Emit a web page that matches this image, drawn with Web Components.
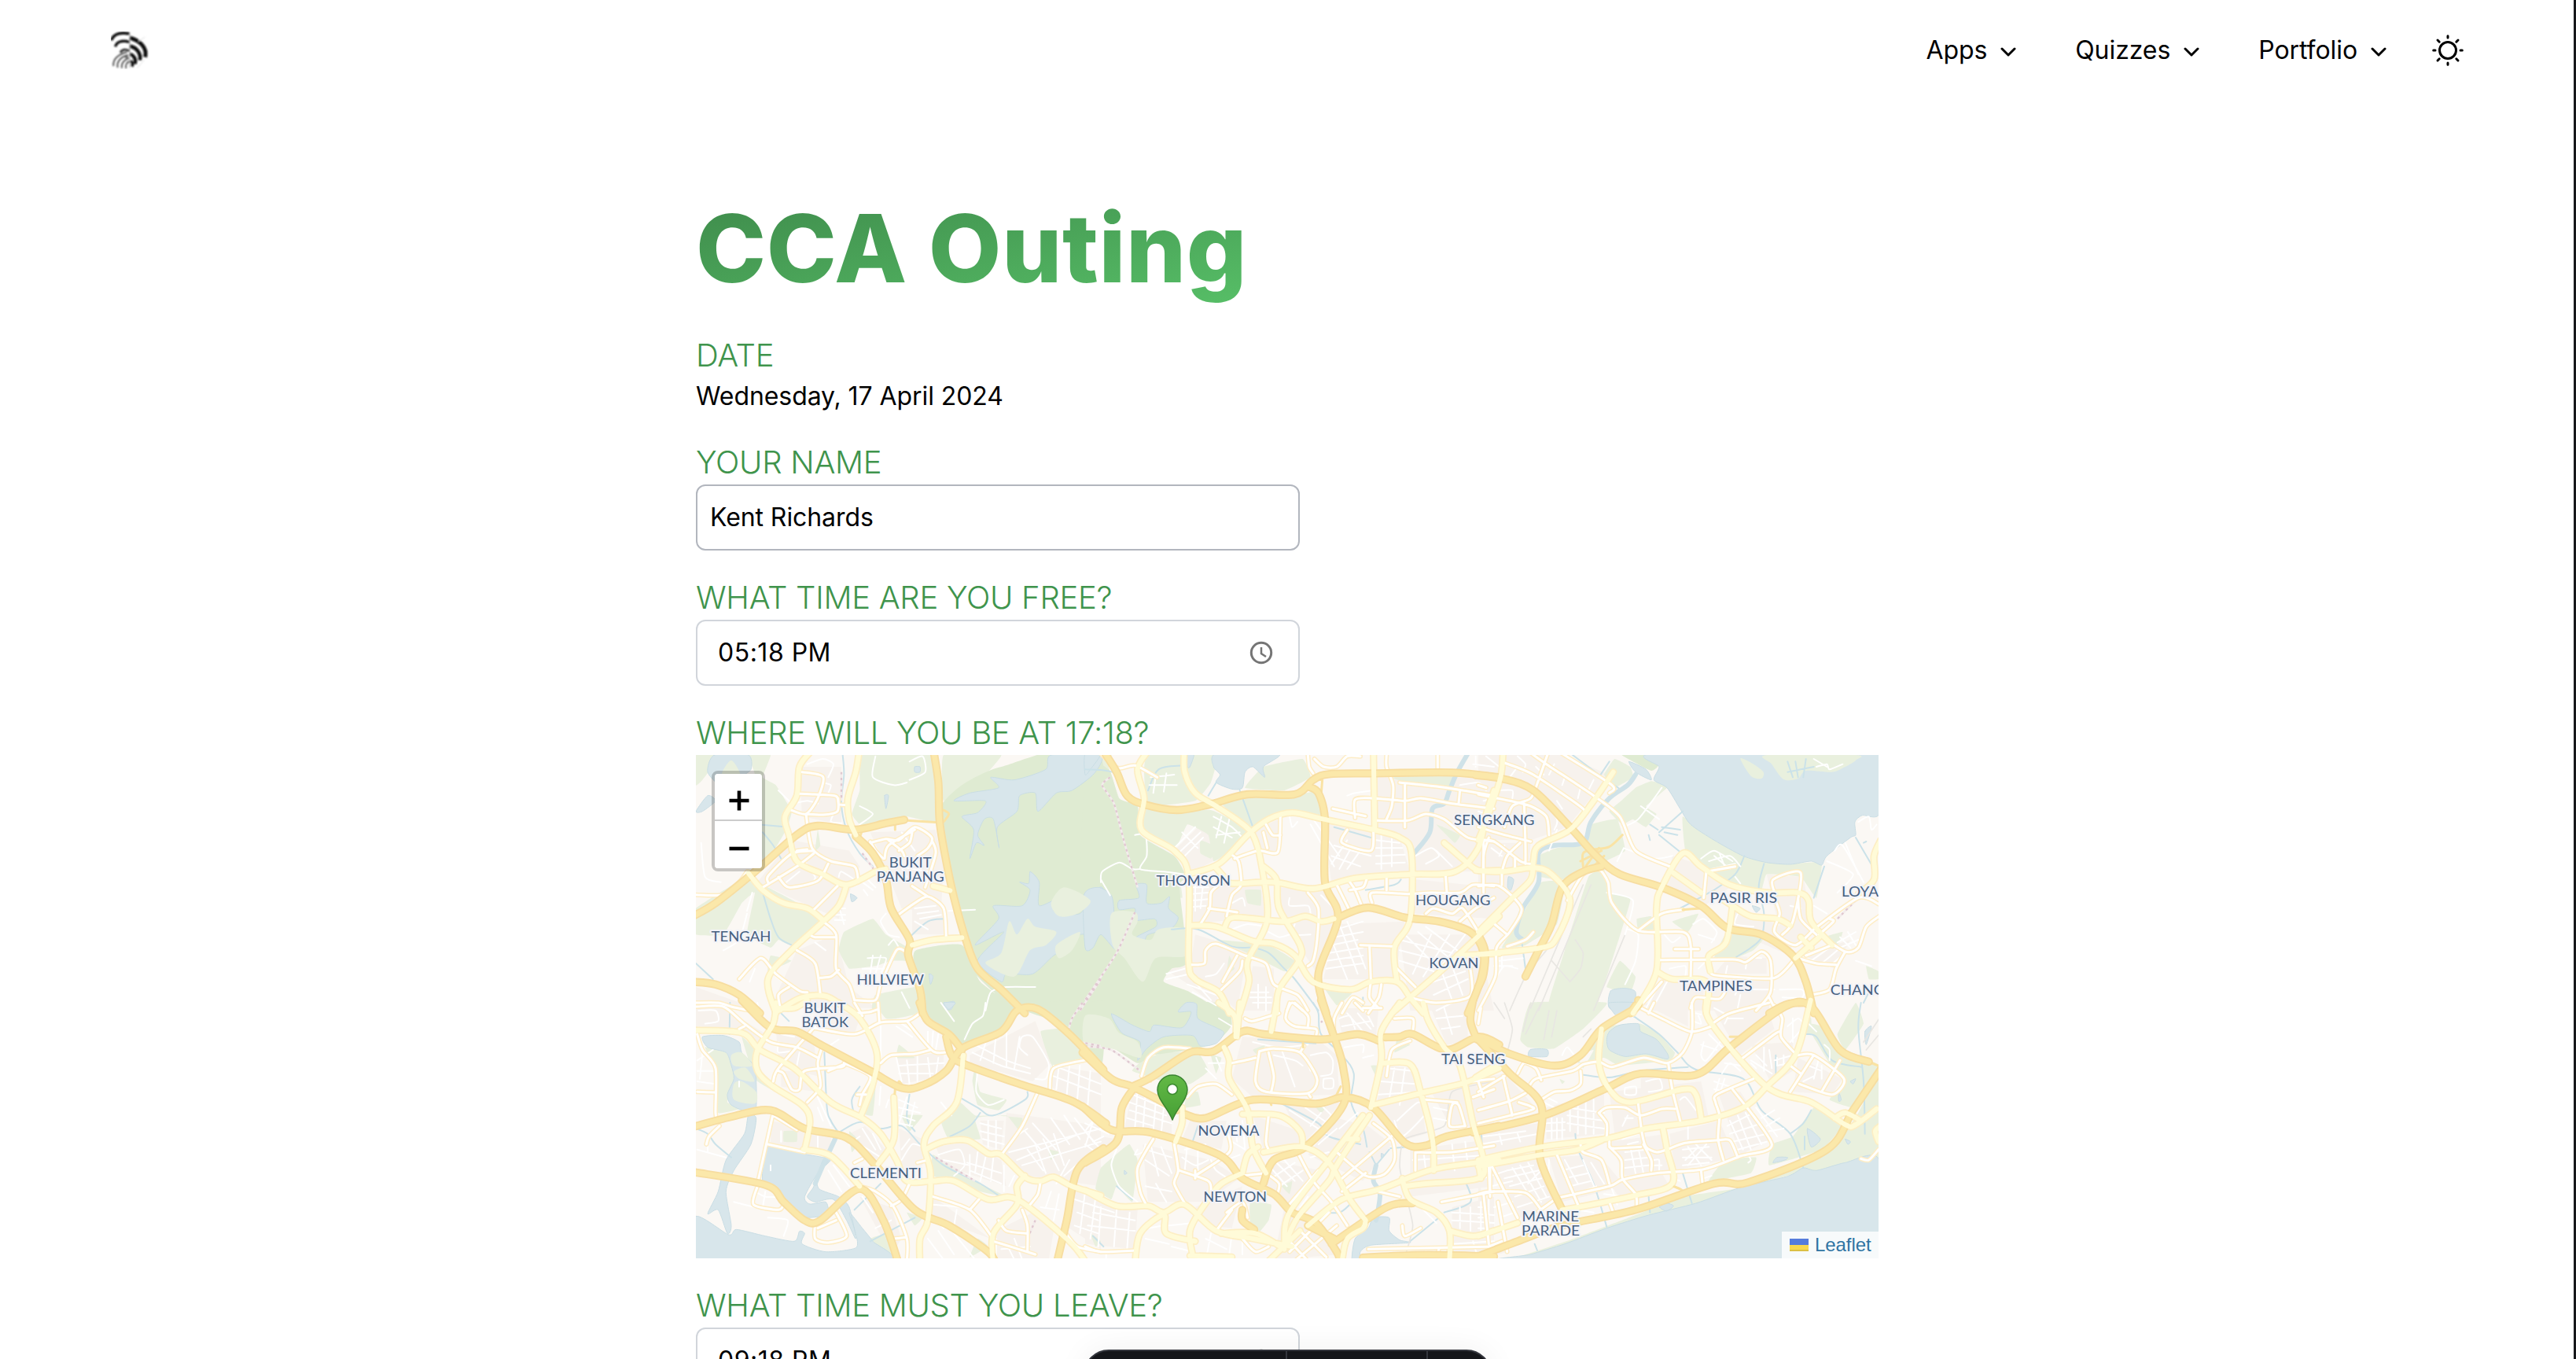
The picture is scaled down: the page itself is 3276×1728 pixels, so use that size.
<!DOCTYPE html>
<html lang="en">
<head>
<meta charset="utf-8">
<title>CCA Outing</title>
<style>
html,body{margin:0;height:100%;overflow:hidden;background:#fff}
body{font-family:Inter,"Liberation Sans",sans-serif;font-size:32px;line-height:48px;letter-spacing:-.08px;color:#000}
</style>
</head>
<body>
<outing-page>
  <site-header slot="header">
    <nav-item>Apps</nav-item><nav-item>Quizzes</nav-item><nav-item>Portfolio</nav-item>
  </site-header>
  <page-title>CCA Outing</page-title>
  <form-field label="DATE">Wednesday, 17 April 2024</form-field>
  <form-field label="YOUR NAME"><text-box tone="strong">Kent Richards</text-box></form-field>
  <form-field label="WHAT TIME ARE YOU FREE?"><text-box clock>05:18 PM</text-box></form-field>
  <form-field label="WHERE WILL YOU BE AT 17:18?"><city-map></city-map></form-field>
  <form-field label="WHAT TIME MUST YOU LEAVE?"><text-box clock>09:18 PM</text-box></form-field>
  <floating-dock slot="dock"></floating-dock>
</outing-page>
<script>
const define = (name, html, setup) => customElements.define(name, class extends HTMLElement {
  constructor() {
    super();
    const root = this.attachShadow({mode: 'open'});
    root.innerHTML = html;
  }
  connectedCallback() { if (setup) setup(this, this.shadowRoot); }
});

define('outing-page', `<style>
:host{display:block;position:relative;box-sizing:border-box;height:1728px;width:100%;overflow:hidden;border-right:3px solid #17181b;background:#fff}
main{display:flex;flex-direction:column;gap:32px;width:1504px;margin:128px 0 0 885px}
</style><slot name="header"></slot><main><slot></slot></main><slot name="dock"></slot>`);

define('site-header', `<style>
:host{display:flex;align-items:center;justify-content:space-between;height:128px;box-sizing:border-box;padding:0 141px}
nav{display:flex;align-items:center;gap:75px}
.logo{width:48px;height:48px;display:block}
.sun{width:48px;height:48px;display:block;margin-left:-21px;margin-right:-5px}
</style>
<svg class="logo" viewBox="0 0 144 144" fill="none" stroke="#111">
<defs><filter id="soft"><feGaussianBlur stdDeviation="2.4"/></filter></defs>
<g filter="url(#soft)">
<path d="M2 34C10 8 40 2 71 9" stroke-width="11"/>
<path d="M17 58C22 38 45 32 71 41" stroke-width="10"/>
<path d="M36 80C42 69 55 66 71 74" stroke-width="9" stroke="#333"/>
<path d="M72 24C108 34 140 60 131 98" stroke-width="15"/>
<path d="M72 56C96 60 116 82 111 110" stroke-width="14"/>
<path d="M72 86C86 90 98 104 92 124" stroke-width="13"/>
<path d="M74 112C82 116 86 124 80 134" stroke-width="11"/>
<path d="M62 78C32 86 6 104 10 132M66 90C44 94 20 112 26 138M68 102C54 106 38 120 42 140M70 114C62 118 54 128 58 141" stroke-width="6" stroke="#555"/>
<path d="M50 98L70 106L62 90Z" fill="#666" stroke="none"/>
<path d="M72 8V138" stroke="#999" stroke-width="3"/>
<path d="M104 38L130 22M128 108L100 140" stroke="#ddd" stroke-width="3"/>
</g></svg>
<nav><slot></slot>
<svg class="sun" viewBox="-24 -24 48 48" fill="none" stroke="#000" stroke-width="3" stroke-linecap="round"><circle r="10.5"/><path d="M0-18.3V-16M0 18.3V16M-18.3 0H-16M18.3 0H16M-13-13L-10.8-10.8M13-13L10.8-10.8M-13 13L-10.8 10.8M13 13L10.8 10.8"/></svg>
</nav>`);

define('nav-item', `<style>:host{display:flex;align-items:center;gap:17px}svg{display:block;width:20px;height:14px;margin-top:4px}</style>
<span><slot></slot></span><svg viewBox="0 0 20 14" fill="none" stroke="#000" stroke-width="3" stroke-linecap="round" stroke-linejoin="round"><path d="M2 3L10 11L18 3"/></svg>`);

define('page-title', `<style>
:host{display:block;width:max-content;font-size:120px;line-height:120px;font-weight:800;letter-spacing:.6px;padding:0 3px 14px 0;margin-bottom:2px;color:transparent;background:linear-gradient(to bottom right,#3f8c4c,#57bf67);-webkit-background-clip:text;background-clip:text}
</style><slot></slot>`);

define('form-field', `<style>:host{display:block}
.label{font-size:40px;line-height:56px;font-weight:300;letter-spacing:-.28px;color:#3f944c}</style>
<div class="label"></div><slot></slot>`, (el, r) => { r.querySelector('.label').textContent = el.getAttribute('label'); });

define('text-box', `<style>
:host{display:flex;align-items:center;justify-content:space-between;box-sizing:border-box;width:768px;height:84px;padding:0 31px 0 26px;border:2px solid #d1d5db;border-radius:12px;background:#fff}
:host([tone=strong]){padding-left:16px;border-color:#b2b6be}
svg{display:none;width:32px;height:32px}
:host([clock]){letter-spacing:.5px}
:host([clock]) svg{display:block}
</style><span><slot></slot></span>
<svg viewBox="-16 -16 32 32" fill="none" stroke="#757575" stroke-width="3"><circle r="12.7"/><path d="M0-7V1L6 5" stroke-width="2.5"/></svg>`);

define('floating-dock', `<style>
:host{position:absolute;left:1378px;top:1716px;display:flex;box-sizing:border-box;width:519px;height:80px;border:2px solid #34363d;border-radius:32px;background:#15161a;box-shadow:0 0 40px rgba(0,0,0,.06)}
i{border-right:2px solid #34363d;box-sizing:border-box}i:nth-of-type(1){width:257px}i:nth-of-type(2){width:179px}
</style><i></i><i></i>`);

/* Map geometry: six sheets, each drawn in thirds of a pixel from its own corner (x, y).
   r residential, g green, f forest, w water, i green island;
   v stream, V river, u minor street, s street, p main road, q ramp, m expressway, d railway, k runway or closed road */
const SHEETS = [
{x:880,y:955,
r:'410,60 570,60 570,280 420,250|380,340 600,380 640,440 560,640 380,560 250,500|680,310 930,300 960,440 950,620 800,600 720,400|400,760 550,700 600,900 700,980 300,980|840,560 960,610 960,700 840,700|15,900 240,980 15,990',
g:'15,15 110,15 40,110 15,130|215,15 300,15 270,100 320,130 380,230 360,300 300,400 270,420 240,90|15,600 210,480 290,520 460,610 490,650 380,740 330,720 300,750 210,700 240,540 190,580 120,700 15,700|650,15 930,15 940,270 820,250 650,285 610,240 640,150|580,690 690,640 740,700 840,760 830,800 760,800 700,820 600,830 560,760|960,15 1180,15 1100,110 960,190|300,780 380,800 290,840|700,930 860,900 880,990 690,990|480,300 490,360 470,380',
f:'1030,130 1180,60 1560,15 1560,1000 1250,985 1090,860 1040,740 1020,600 960,400 945,220|855,760 1030,740 1100,880 1240,1000 890,1000 850,830',
w:'85,15 215,15 225,70 180,100 110,130 60,80|15,230 60,170 90,190 40,230|1370,15 1560,15 1535,85 1450,150 1390,160 1320,230 1310,160 1250,170 1240,230 1165,290 1172,370 1150,260 1115,260 1090,320 1115,360 1085,350 1060,410 1075,300 1030,250 1090,235 1120,190 1000,190 1060,160 1170,140 1140,100 1230,110 1350,70|1290,460 1325,500 1325,590 1420,550 1380,610 1480,620 1540,530 1570,530 1570,690 1480,700 1450,740 1380,780 1300,850 1200,850 1180,880 1090,800 1190,690 1080,740 1170,640 1150,590 1260,590 1290,530 1250,500 1285,505|850,60 870,60 870,80 850,80|735,170 750,170 740,220|605,545 630,560 610,575|960,965 1000,955 990,985 970,985|905,850 920,860 910,890',
i:'1210,650 1240,700 1280,640 1310,670 1390,690 1350,740 1290,760 1230,860 1120,810 1180,770|1370,580 1420,520 1520,570 1470,620 1400,630|150,35 185,95 115,90|1390,740 1480,690 1450,760 1400,790',
v:'575,15 580,90 570,200 590,300 640,390 690,440|270,540 300,640 330,710 380,740|15,810 80,870|250,280 370,290|830,710 900,650 960,640|270,310 310,360 340,410',
u:'440,50 500,30 540,50 520,100|500,120 530,130 520,160|390,200 440,190 480,200|540,240 530,270 570,275|640,210 690,240 640,280|700,20 690,100 770,130 820,120|830,40 880,20 890,80 830,110|620,70 610,120|360,500 410,460|430,420 470,480 460,500|560,480 570,460 620,490|560,590 580,660|545,600 585,600|545,625 585,625|545,645 585,645|650,500 690,530|670,490 700,520|655,530 670,550|740,620 720,650 750,700 790,710|750,740 770,720 790,750|850,600 930,590|860,620 940,610|870,640 950,625|850,650 900,680|210,620 180,720 120,760|230,540 210,610|35,350 50,480 110,500|330,150 380,200|670,790 740,790 720,850|650,830 740,830|690,780 680,850|720,780 700,850|780,410 820,480|790,440 900,460|320,860 390,910|240,830 220,880|1120,990 1140,920 1200,900 1310,900|980,610 1080,605|800,310 850,380|470,730 510,760|800,920 830,980',
s:'420,80 500,98 480,180 435,240 370,222|400,162 470,165 550,172 560,203 590,205|435,240 500,243 555,230 558,180|435,240 458,370 530,420 620,440 635,500|465,380 380,392 292,475 290,500|270,520 400,440 465,390|330,480 370,520 480,495 520,430|460,610 520,550 555,515|500,650 550,700 550,830 600,890 620,950|450,700 470,710 545,710|400,760 470,810 490,930|180,870 262,790 320,850 410,915 440,920|490,865 530,860 560,835|15,548 120,548 180,500 210,460|780,630 850,580 900,555 960,600 970,710|900,555 840,515|680,350 740,335 790,340 850,290 915,330 900,370 860,400|735,410 750,360 850,300|750,340 800,380 810,400|680,345 700,380 730,410|915,340 930,390 890,520|620,950 700,950 720,890 780,760 815,765|15,960 100,960 150,975 220,990|790,380 830,350 840,310|400,380 440,375|340,990 330,930 370,900',
p:'455,0 410,60 400,170 355,250 370,320 400,420 500,470 590,510 700,460 740,450|638,0 625,80 595,180 600,260 625,320|215,465 270,530 350,580 440,600 500,645|590,510 560,590 490,660 380,760 290,870 320,1000|330,990 420,940 510,935 570,970|840,740 920,720 1030,712|920,515 985,532',
q:'820,265 940,272|960,225 980,240 960,270|650,300 640,330|775,275 775,300',
m:'922,0 940,120 945,270 970,420 1000,560 1045,720 1090,830 1180,910 1270,1000|0,632 90,580 240,460 400,320 480,285 620,300 740,275 810,262|625,325 690,390 740,490 760,600 830,720 825,780 870,910 880,1000|0,880 90,890 180,930 260,1000',
d:'1560,870 1480,990|570,80 570,190|650,390 700,460'},
{x:1380,y:955,
r:'240,80 360,90 350,150 240,170|480,240 610,300 490,420 390,470 350,370|640,300 740,260 740,390 670,390|910,270 1200,330 1240,460 940,500|1100,100 1560,100 1560,460 1240,460 1230,350 1110,290|400,510 670,510 690,630 410,660|740,520 910,530 960,640 880,840 750,640|960,660 1220,650 1180,870 910,870|1200,700 1500,700 1560,990 1240,990|420,700 620,760 580,990 400,830|640,820 720,830 720,990 600,990|1260,490 1560,520 1560,640 1250,620|300,830 380,800 500,930 520,990 380,880',
g:'0,15 100,15 90,60 130,180 100,120 0,80|240,15 500,15 480,120 420,190 240,210 225,80|230,220 480,225 620,300 540,390 490,420 470,320 390,280 340,380 220,300|510,190 640,150 840,160 900,150 905,250 790,235 700,250 635,300|610,140 680,60 830,30 860,100 760,150|1170,100 1400,90 1380,140 1230,120|610,530 670,530 670,590 620,580|500,720 700,740 800,800 760,840 620,770|900,880 1020,920 960,970|440,340 510,370 480,410 440,390|1340,280 1430,320 1410,350|550,780 570,830 540,850|300,20 400,20 400,60|210,400 350,460 370,560 250,520',
f:'0,90 90,70 130,180 200,210 210,320 340,400 385,480 360,520 390,800 330,830 300,880 400,920 480,990 0,1000',
w:'0,10 60,10 20,70 0,90|500,10 740,10 680,60 685,100 640,60 610,80 600,140 560,145 500,120 515,90 490,60|-5,550 50,520 100,550 110,620 100,700 112,755 60,700 30,750 0,750|130,570 205,560 195,510 235,510 235,580 290,580 322,555 318,600 355,635 330,675 240,700 225,730 195,710 270,670 265,640 190,645 190,600 130,605|390,15 415,15 400,60 390,60',
i:'100,620 190,615 200,650 180,700 250,720 280,680 380,680 385,780 270,790 220,880 150,790 105,740',
v:'590,150 615,220 640,290|0,70 60,72 105,80|330,680 430,680 560,745 640,750 700,770 760,830 800,870 890,990|1070,530 1180,510 1205,490|950,290 1090,330|240,150 280,70 370,55|470,170 500,120|1060,940 1060,980',
V:'1460,10 1420,80 1390,150 1370,200 1325,220 1315,310 1255,390',
u:'250,100 340,90|245,130 350,130|270,90 260,160|310,85 300,155|340,370 420,290|355,390 440,310|380,400 450,330|370,310 430,370|490,250 560,290 600,330|490,290 560,330|500,320 590,310|520,250 500,330|550,260 530,350|400,520 470,520|405,545 470,540|405,570 470,565|405,595 460,590|420,510 420,610|450,510 440,600|60,500 65,460 130,425 180,450 210,450|190,320 230,320 235,400 210,450 300,460 380,470|60,490 95,550|860,280 950,440|870,260 970,400|940,400 1050,440|950,360 1090,400|940,430 1000,340|970,450 1020,360|1000,450 1050,380|1110,340 1200,350|1110,370 1210,370|1110,400 1220,395|1110,430 1220,425|1130,320 1130,450|1170,330 1170,440|1260,400 1320,370 1350,400 1300,430|1340,380 1400,440|1430,130 1500,120 1530,150|960,680 1060,650|950,710 1060,690|940,740 1040,720|930,770 1060,750|920,800 1060,780|920,830 1060,810|970,660 1040,850|1000,650 1070,830|940,720 1000,870|1200,720 1400,770|1200,760 1360,800|1200,800 1330,840|1220,700 1350,830|1270,690 1390,790|1300,670 1420,760|1250,850 1320,700|1290,860 1390,700|1330,860 1450,700|1300,890 1450,840|1330,930 1460,870|1360,840 1400,950|1400,820 1440,930|310,850 380,830|310,870 400,850|390,890 500,930|410,920 500,970|400,860 480,950|780,560 780,590 850,590 860,620|800,660 790,700 860,700|700,690 740,710 780,700|560,680 620,660 690,670|560,580 600,560 610,590|630,920 700,920|630,940 710,940|640,960 710,960|660,890 660,980|690,900 690,990|780,250 790,290 810,270|900,550 940,590|1000,170 1030,160 1100,150|1480,50 1560,60|1490,20 1490,60|530,810 500,850 460,860',
s:'850,15 855,60 870,85|875,30 910,60 960,60 1000,20 1050,20|1150,15 1150,60 1175,130 1170,210 1150,260|1345,15 1345,65|1200,120 1380,140 1560,170|1220,130 1220,290|1110,265 1230,265 1300,240 1370,260 1460,330 1560,345|1030,255 1030,185 1100,180 1220,190 1280,180 1400,200 1560,220|945,220 1070,248|1430,150 1425,200|1000,300 980,350 1090,380 1100,300|960,510 1010,610|1010,500 1030,530 1055,590|1075,485 1060,520 1010,530|1095,580 1095,540 1230,545 1320,540 1430,540 1480,510 1560,515|1150,480 1150,530|1375,470 1380,540|1050,740 1170,745|1085,745 1090,870|850,540 890,600 885,720 870,800 850,820|470,600 545,610 580,615|440,660 475,600 480,540 510,510|540,630 560,550 595,510 585,420 550,390|570,410 660,380 735,385 745,250|690,280 715,320 745,320|680,310 695,370|400,815 455,810 460,760 500,735 610,780 690,810 720,890 810,930 850,990|520,910 590,840 600,800|525,880 580,780|1130,890 1120,940 1080,1000|1240,940 1340,960 1470,935 1470,830|1190,830 1260,900|1300,620 1330,600 1400,620 1440,600 1500,690|1430,650 1490,600 1560,560|1520,540 1520,400 1540,330|980,1000 1020,940 1060,960|1090,880 1085,940 1120,980|60,10 125,65 190,55 275,100|770,990 790,960 830,990',
p:'240,0 200,70 225,180 215,300 340,380 395,480 395,800 420,870 510,920 550,1000|378,0 380,80 420,160 500,210 590,270 640,320 670,420 695,640 620,800 625,880 590,1000|390,470 510,430 620,320 700,260 790,235 910,260 1100,300 1200,330 1245,390 1240,640 1180,750 1190,880|495,440 530,480 560,505 720,500 870,525 1030,485 1240,470 1410,460 1500,370 1530,240 1560,150|680,440 730,490 740,600 820,740 815,800 740,910 730,1000|400,665 500,670 640,725 720,735 800,780 870,880 1010,910 1090,880 1190,880 1240,940 1290,1000|530,680 550,640 600,635 760,650 840,630 900,650 950,640|1100,0 1105,290|1170,1000 1240,940 1400,800 1580,630|1370,350 1450,420 1500,455 1580,455|1420,780 1580,772',
q:'905,110 900,170|870,100 900,110',
m:'70,0 120,80 160,170 230,205 350,225 470,205 620,165 800,165 870,110 930,88 1100,85 1400,82 1580,100|850,135 890,160 915,260 915,500 965,635 890,850 920,1000|965,635 1080,597 1220,635 1350,650 1470,690 1520,770 1510,870 1460,1000',
d:'95,100 65,130 110,200 150,350 200,520|190,615 120,770 0,950'},
{x:1880,y:955,
r:'0,15 320,15 500,90 340,290 200,340 0,340|0,350 200,350 190,480 60,640 0,600|740,400 870,440 960,520 850,600 720,520|980,590 1180,680 1190,780 960,680|1100,470 1240,480 1280,690 1180,760 1130,600|700,860 860,890 860,990 640,990|870,880 1110,870 1110,990 880,990|1240,780 1420,720 1360,830|960,780 1100,790 1100,850 900,850',
g:'520,30 580,60 590,100 520,140 480,90|545,190 600,140 660,115 725,135 640,210 680,240 640,290 590,260 550,280 500,230|780,250 900,340 1010,400 1010,500 990,530 920,500 850,430 790,380|430,280 530,260 560,380 460,430 400,440 330,490 240,480 230,400 300,370 400,355|240,500 330,500 300,660 180,740 90,750 170,620|1000,405 1190,430 1310,425 1290,560 1230,480 1100,470 1080,530 1000,530|420,480 480,450 500,540 580,570 440,1000 260,1000 330,760|950,690 1090,710 1050,760 980,790 900,790|605,640 660,630 670,680 610,680|740,650 840,620 800,690|490,900 540,800 600,860 580,920|1480,820 1527,840 1527,870 1490,870|1320,710 1390,690 1370,740',
f:'545,10 685,15 688,55 660,75 600,45',
w:'670,10 1530,10 1530,238 1465,245 1437,270 1440,320 1420,330 1330,400 1310,435 1270,420 1190,432 1100,425 1010,400 900,340 810,280 770,220 720,140 670,110 690,60|505,915 560,905 600,920 585,1000 500,980|115,480 135,490 125,530 112,520|1045,590 1075,600 1060,615|575,40 640,70 660,110 600,80',
i:'1000,28 1050,50 1088,80 1080,105 1040,95|1100,15 1440,15 1440,35 1400,60 1350,80 1250,75 1220,105 1165,108 1120,50',
v:'1015,400 980,470 900,530|1090,430 1070,520 1090,620 1080,710 1040,750 985,785|780,230 690,310|1320,440 1280,560|1440,330 1510,450|690,320 770,385|360,15 420,60 460,90 540,145|500,40 460,100|1180,40 1200,100|1210,40 1220,100|1250,30 1240,100|1180,80 1280,60|700,290 770,300|710,310 760,320|655,280 685,300|650,320 655,340|900,530 770,600|1480,345 1470,350|165,720 180,830|1500,900 1470,960',
V:'600,90 570,130 500,180 430,270 400,350 290,360 230,390 230,500 170,600 145,690 170,720',
u:'20,190 60,180|80,150 130,150 130,180|30,20 80,60|150,20 180,50 170,80|220,60 250,90|120,100 150,60|290,50 270,90|330,100 320,130|390,140 380,180|440,110 420,150|300,190 320,220|240,170 300,260 290,300|0,230 30,240|50,370 90,400|100,360 80,400|270,380 300,300|1360,380 1390,360 1470,500|1330,420 1430,470 1370,540|1400,350 1450,470|550,290 610,260 700,140|555,370 670,410 740,400|530,420 555,370|620,210 690,260|880,420 960,400 1000,440|900,400 960,450|920,390 940,440|850,410 900,380 970,420|890,450 980,430|980,480 1000,505|820,660 860,640 910,690 890,730|840,700 900,720|710,700 740,730 770,710|990,620 980,660 1050,670|1190,590 1230,600|730,830 790,820 790,860|840,830 870,800|1020,830 1030,790 1080,790|940,870 950,820|1370,730 1440,690|1380,750 1450,720|1380,710 1420,750|1410,690 1440,740|1270,800 1340,750|1310,810 1370,760|1340,820 1400,770|640,980 690,890|650,930 700,870|980,930 1000,910 1130,910|1150,910 1235,910 1235,940 1160,940|560,890 600,800 610,700 570,680|1450,270 1490,250 1500,300 1520,280|1290,60 1330,50 1340,70 1390,50|1280,30 1330,60|70,860 100,820 150,830|60,820 130,820|80,800 170,790|90,780 90,830|490,540 590,570 560,700|1000,930 990,980|880,910 950,890|720,880 660,990|1440,800 1500,820|1280,590 1330,620',
s:'320,10 510,130 500,160|190,0 260,50 440,170 540,250 600,380 730,440|100,45 210,90 400,220 390,250|265,10 230,110 200,180 130,210 100,290|0,165 120,190 200,210 260,250 270,320|0,290 100,320 200,345|0,340 60,345 160,420 200,430|180,430 180,360 175,200|20,340 20,500|90,460 110,400 160,350|140,450 140,410|0,515 80,515 165,600 120,690 70,750 65,860 0,990|50,650 110,700|90,460 90,510|210,690 180,720 110,745|340,570 400,470 460,452 495,500 510,580 610,685 780,690 810,740 810,870|610,685 700,620 780,605|750,755 840,755|690,797 970,795 1020,805 1080,765 1115,800 1115,920 1060,990|1110,940 1130,980|880,800 890,850 960,860 1130,865 1210,790|870,460 860,560|870,460 980,440|1130,540 1125,490 1230,465 1200,650 1160,700|1130,560 1150,620 1130,690 1210,740 1290,670|1280,680 1450,560 1530,585|1220,560 1230,640 1290,700|1300,700 1400,765 1450,750 1480,670 1530,630|1220,790 1290,810 1365,815|1400,765 1365,830 1340,910 1270,930|810,980 830,940 920,945 950,900|1250,780 1350,740|620,970 700,880|1340,640 1355,650 1300,700|0,130 30,140',
p:'95,0 85,100 40,240 0,340|515,80 440,190 350,300 230,360 210,420 200,490 130,560 0,690|-10,455 90,460 210,445 280,470 350,570 300,710 240,750 0,775|590,1000 680,840 680,600 700,520 780,390 850,440 960,510 1100,540 1220,540 1260,570 1270,650 1350,740|745,465 850,540|900,545 970,590 1040,630 1140,640 1190,665|970,590 945,730 880,780 885,840|680,840 740,870 870,880 870,1000|1210,790 1300,710|1230,710 1270,750|1535,340 1510,400 1510,490 1450,545',
q:'400,440 400,390 440,375 500,365 550,320|410,440 460,370|390,420 470,380|780,605 850,600|440,440 480,400',
m:'-10,92 90,105 210,150 350,290 450,400 540,470 700,520 850,590 950,675 1080,700 1200,780 1250,880 1280,1000|470,440 400,460 320,520 280,660 230,760 180,860|0,700 25,760 20,850 0,900|1110,1000 1180,965 1260,960|600,970 580,1000',
d:'1440,570 1370,640',
k:'430,510 230,990|400,510 200,980|350,590 360,600|370,720 400,770 390,830 350,880|280,800 350,880|560,700 440,990|260,760 180,860 120,990'},
{x:880,y:1275,
r:'15,20 120,20 300,130 250,170 190,100 15,90|320,90 460,100 480,280 330,240|340,260 440,260 480,340 340,320|780,210 960,190 960,280 800,310|1060,200 1310,70 1370,230 1300,300 1060,230|1200,420 1560,470 1560,700 1280,660 1190,580|930,550 1050,530 1180,600 1200,700 960,620|600,500 660,470 740,560 700,600|640,740 760,780 800,900 760,960|1160,870 1300,800 1380,870 1360,990 1160,990|920,740 1140,900 1000,850 900,820|1100,450 1190,450 1180,560 1110,540|790,480 880,520 880,620 800,640|1450,700 1560,740 1560,940 1440,860|300,450 530,500 530,580 300,540|1380,240 1560,270 1560,440 1370,320|500,0 640,60 620,120 480,90',
g:'190,130 250,190 240,270 440,390 430,400 300,330 240,290|50,170 130,190 155,240 160,290 135,380 200,400 100,420 90,260|700,0 870,0 870,40 780,60 740,60|1330,110 1430,100 1510,200 1380,250|1080,250 1100,340 1200,370 1170,410 1090,390 1070,300|1010,370 1080,430 1150,430 1260,440 1250,490 1200,430 1080,440 1100,520 980,520 950,450|920,580 1060,670 1200,740 1100,720 920,660|680,900 760,880 790,985 730,985|660,330 700,320 690,430 650,420|790,160 850,210 780,210|350,490 400,490 400,530 350,530|600,490 640,530 610,570|800,430 880,430 830,490|1360,560 1400,570 1370,600|820,800 880,820 850,850|1090,900 1130,930 1060,970',
f:'890,0 1230,0 1200,90 1020,160 960,110 920,70|1280,10 1330,0 1560,0 1560,250 1430,90 1340,20',
w:'15,815 140,885 170,865 280,890 390,910 410,872 430,880 420,920 510,950 625,935 625,880 600,800 650,860 690,910 740,985 15,985|215,430 245,440 225,540 160,640 130,720 150,850 135,880 100,790 60,805 100,720 130,600 200,500|290,550 350,550 420,575 500,590 530,600 480,650 430,740 450,768 510,760 520,800 490,815 420,815 350,740 270,680|500,600 530,590 480,660 485,710 560,740 600,780 625,900 590,830 540,750 470,760 440,740 465,700|40,130 120,125 180,150 190,190 240,250 245,400 220,420 150,390 135,350 160,290 150,240 130,190 60,170|960,0 1005,0 980,25',
i:'150,200 190,190 230,240 160,240|160,262 205,248 238,300 180,290|160,310 190,300 245,340 240,385 160,370',
v:'145,0 143,120|505,190 515,400 530,450 555,490|560,495 640,455 720,480 800,470 870,540 960,620 1100,690 1190,750|1020,360 1090,400 1150,430 1270,370 1280,340|985,510 1060,470 1100,420|640,320 610,370 620,430|15,480 60,500 90,540 150,590|620,790 720,690|680,910 850,820|830,350 820,440 850,490|340,40 370,70',
V:'555,500 500,620 470,690',
u:'25,30 90,30 100,70 50,80|80,180 20,220|20,260 90,260|20,300 90,310|40,190 30,290|330,150 330,190 400,180|340,120 390,130|410,190 400,240|780,90 840,130|800,80 860,120|830,80 860,110|900,110 900,160|920,110 915,180|940,120 930,180|790,240 960,230|790,270 920,270|780,210 800,300|820,220 830,310|860,200 860,300|900,210 910,290|940,210 930,280|1040,140 1070,80 1110,50 1120,0|950,0 1000,70|1070,190 1180,240 1290,270|1080,160 1200,220 1290,250|1130,120 1100,220|1160,120 1150,230|1200,110 1200,240|1250,130 1230,250|1280,200 1250,170 1260,130 1300,130 1360,230 1350,290 1310,290|1380,280 1560,350|1380,240 1560,310|1400,240 1390,330|1440,240 1430,350|1480,240 1470,370|1520,260 1510,390|1090,260 1085,340 1130,390 1190,370|790,370 860,400|790,400 870,420|790,430 850,450|790,460 840,470|820,360 790,460|850,380 830,470|720,320 715,390|750,370 740,400|1100,460 1180,480|1100,490 1190,510|1110,520 1190,540|1130,450 1130,550|1160,450 1160,560|1210,570 1560,480|1240,600 1480,500|1260,620 1560,530|1280,560 1340,640|1310,540 1350,650|1340,520 1400,640|1380,500 1420,620|1270,490 1330,560|1300,460 1390,560|1370,440 1440,540|1420,430 1480,520|1460,440 1540,540|1220,520 1280,480|1500,590 1420,660|1540,420 1500,550|940,580 1020,560 1040,620 1000,660|960,600 1060,620|1060,580 1060,660|1090,570 1080,650|1120,590 1100,680|1150,590 1140,680|1050,610 1180,650|1060,640 1180,690|1190,620 1190,720|610,520 720,590|620,540 710,610|650,480 700,560|640,510 600,540|690,500 720,560|800,600 840,540 880,550|800,560 830,520|250,0 255,50|300,620 300,640|240,720 280,740 330,740|280,720 270,780|290,820 365,830 350,890|160,760 240,780|480,400 500,450|480,360 530,470|340,490 340,530|480,510 480,560|20,560 130,590|60,520 60,570|520,640 570,720|540,620 600,700|650,740 690,800|700,860 760,830|920,770 1030,780|900,800 960,860|1010,790 1000,850|1160,900 1160,980|1200,920 1230,980|1230,900 1260,980|1180,940 1290,930|1460,750 1550,780|1470,800 1550,830|1460,850 1550,880|1500,720 1480,880|1540,740 1520,900|1440,600 1390,690|1210,700 1230,660|1370,720 1350,780|1400,730 1380,830|1330,780 1400,790|720,90 720,220|180,300 180,320|560,140 530,160|950,380 990,430|1000,880 1080,980|940,870 1000,960|900,900 960,980',
s:'15,15 120,15 200,80 300,150 400,170 480,210|200,90 180,100|470,90 330,250 310,300|500,160 480,230 490,320 440,380|330,260 350,270 380,330 410,330 430,260 570,245 580,230|580,230 680,280 650,350 640,390|630,350 665,350|460,95 620,120 720,75 820,70 870,40|820,70 920,185 990,185|720,230 760,200 850,195 910,180|20,120 40,180 90,250 90,420 100,450|20,340 90,342|105,470 65,510 55,540|308,430 250,690|310,430 400,485|290,540 430,570|250,700 235,770 330,790 350,770|640,700 700,720 770,780 820,900 820,985|830,690 800,750 760,775|920,740 1060,790 1150,900|1060,790 1095,750|1185,575 1260,470 1320,340|1365,335 1380,250 1505,218|1330,680 1320,730 1290,770|1150,910 1310,960|470,840 470,900 520,915 590,890 550,800|480,860 550,830|620,610 650,595|1420,870 1470,930 1560,950|1170,830 1200,870 1280,880|1260,790 1280,850 1280,950|630,40 680,35 710,25|710,0 715,75|770,900 815,895|520,260 580,235|860,610 900,600|620,0 650,50',
p:'320,0 310,80 250,180 250,260 310,320 420,390 450,450 430,560|15,105 190,115 260,180 390,250 530,380 650,440 720,500 780,600 820,680 920,680 1000,680 1130,750 1240,750 1440,910 1510,1000|320,20 390,20 440,-10|560,0 640,60 705,190 690,310 645,430|770,360 770,520 710,615|1035,200 1010,380 920,470 885,540 910,650 900,830 870,900 870,1000|890,560 960,530 1050,525 1130,575 1180,580 1270,665 1330,680 1380,665 1450,700 1560,735|1270,660 1240,700 1240,770 1150,880 1150,1000|425,560 530,585 640,700',
q:'780,330 790,300 805,320|775,330 772,370',
m:'190,-10 300,95 400,110 500,165 680,260 800,325 880,315 970,260 1030,175 1180,110 1240,30 1320,25 1440,120 1570,255|868,0 900,70 980,120 1030,180|970,130 990,200 1040,235 1250,310 1450,375 1580,460|0,475 150,435 300,410 430,480 590,515 700,620 850,790 980,850 1130,950 1160,1000|0,645 280,695 350,760 430,830 490,830 640,710 730,830 790,1000|1570,555 1470,640 1430,830 1390,1000',
d:'1490,0 1450,60 1435,110|1480,150 1560,165|930,590 1080,680|1310,830 1280,900'},
{x:1380,y:1275,
r:'600,130 900,150 960,200 970,350 640,360 560,290|960,20 1120,20 1110,130 980,120|180,340 330,410 330,500 150,480|400,450 540,450 520,560 370,520|640,430 820,490 820,550 680,560|760,390 980,380 830,540|850,580 960,440 1080,470 1170,540 1060,680|220,540 480,600 590,670 460,760 240,760|700,600 900,640 780,780 690,700|1140,240 1270,250 1300,500 1230,520 1110,400|1320,340 1560,280 1560,460 1400,480|1240,560 1560,520 1560,700 1240,740|0,500 120,520 0,600|1400,780 1560,740 1560,980 1400,980|420,780 600,700 560,860 460,850|0,740 200,790 190,940 0,920|1310,0 1460,0 1460,150 1380,160|760,780 900,840 980,960 720,980',
g:'220,220 300,190 430,190 470,260 400,310 300,300 180,260|170,540 200,600 180,760 120,700 100,750 40,710 60,630 140,560|630,760 710,770 700,830 660,880 630,850|390,340 430,340 440,390 380,400|480,200 520,210 500,270|640,180 690,160 660,200|1090,240 1120,240 1110,280|750,700 790,680 780,730|1190,140 1240,160 1180,190|650,380 790,390 650,370|20,880 60,910 40,930|880,400 920,400 900,420',
f:'0,0 500,0 560,80 500,150 400,180 260,200 200,230 100,170 0,170',
w:'100,42 180,85 245,110 265,85 370,95 405,35 355,35 385,0 425,5 430,60 500,95 530,115 500,155 440,165 410,125 300,130 235,175 200,220 210,150 140,115|1100,820 1160,820 1160,870 1200,905 1240,915 1090,925 1050,950 1050,985 1018,985 1030,900 1080,860|1130,575 1140,580 1130,590|150,640 160,650 150,655',
i:'0,50 90,60 130,115 200,150 210,210 100,175 0,165',
v:'870,0 890,40 900,120 980,200 1025,270 1015,380 1060,480 1075,550|750,385 890,460 930,510 1050,540|660,140 880,155|1350,820 1240,910|1450,680 1470,760 1370,800|410,530 430,470|1085,570 1110,620|1160,560 1110,620|1165,555 1230,550|120,700 180,750|30,890 70,930|900,800 970,800 1010,770',
V:'1110,620 1100,680 1125,730 1110,830',
u:'180,350 300,400|170,380 310,430|170,410 330,460|160,440 260,470|200,330 190,480|230,350 220,490|270,370 260,490|300,400 290,500|0,490 60,560|0,460 90,500|30,530 70,510|0,540 40,570|30,450 0,490|470,230 530,230|460,250 500,290|500,210 520,260|230,560 330,590|230,600 320,660|250,540 280,660|290,550 330,650|270,690 310,760|230,700 330,720|380,560 460,540|370,590 420,620 470,600|390,540 380,640|430,550 430,640|480,600 500,640 560,680|540,600 590,580|560,530 610,560|560,490 630,500|570,460 580,530|600,450 610,560|720,200 800,220 830,240|750,180 800,320|640,150 740,170 850,160|860,200 920,190 945,220 940,270 900,280|860,260 850,230|910,290 945,290 945,325 910,325 910,290|970,60 1010,50 1030,100|980,90 1090,70|1000,40 1060,110|1040,40 1090,100|1070,30 1100,90|990,170 1060,160 1060,190|780,410 920,500|840,400 940,470|900,390 950,440|860,470 900,420|890,490 940,430|700,620 770,700|730,610 800,680|760,600 830,680|710,670 800,610|740,700 830,640|860,590 930,570|1150,250 1250,260|1130,300 1260,310|1120,350 1280,340|1180,250 1160,370|1220,250 1200,390|1190,450 1270,380 1300,420 1210,510 1180,450|1360,100 1430,90|1340,60 1440,50|1340,30 1400,0|1370,20 1400,120|1330,440 1380,450|1330,400 1380,410|1400,800 1560,810|1400,830 1560,840|1430,780 1430,860|1470,780 1470,870|1510,760 1510,870|1540,750 1540,870|1400,920 1560,910|1250,600 1560,580|1290,560 1300,640|1400,540 1410,640|1450,530 1460,620|20,770 110,800|30,800 190,830|10,850 190,870|60,780 50,930|120,790 110,930|170,800 160,940|80,960 80,985|320,850 410,840|330,930 410,950|240,860 300,850|230,900 320,920|460,900 540,940|480,880 460,985|560,880 550,960|600,900 600,960|820,780 850,740|1160,380 1220,350|1290,790 1340,840|800,850 840,790|120,560 100,620 130,700 200,760|1100,200 1060,210|510,60 560,90|970,480 1040,420|890,540 960,480|200,560 190,580 220,570 230,540|1480,910 1500,980|1300,940 1300,970',
s:'610,60 640,70 740,40|780,0 765,60 800,90 880,100 880,130|800,0 850,50 850,90|560,230 610,220 650,210|665,185 650,300 690,340 850,345 885,290 820,190 720,175 665,185|700,190 720,280 710,340|850,345 860,360|820,190 835,165|215,280 240,210 300,170 400,175|390,360 430,320 500,310 560,350|260,520 200,630 210,720 230,765|340,540 355,640 340,690 380,765|360,640 470,680 480,720|420,660 550,570 545,500|600,660 690,650|690,650 740,690 730,740|950,130 950,60 980,0|1180,60 1250,60 1250,110|1150,280 1170,180 1240,145|1300,370 1420,380|1450,470 1390,470 1400,390 1425,390 1450,470|1480,300 1560,290|1480,360 1560,330|1260,570 1400,570 1560,545|1260,570 1260,640|1100,460 1170,520 1180,600 1140,655 1070,660 960,570|980,670 1180,500|810,570 870,680 940,760 1000,850|890,640 770,780|1210,850 1220,890 1280,860|1080,940 1560,930|0,930 60,950 190,945|540,800 600,760 620,820|500,870 560,790|1120,720 1200,740|1060,20 1130,20|1540,620 1545,740|1360,760 1560,720|780,950 930,800|800,985 960,850|820,870 920,970|780,910 850,985|860,830 900,870|700,430 690,530 700,560|980,720 1070,650|1340,970 1350,940|1030,0 1060,30|1500,80 1510,20|420,640 420,670|600,900 650,950 700,930|470,850 500,870',
p:'590,0 580,130|730,0 710,110|510,0 570,50 575,130|530,170 550,220 550,290 620,410 640,550 690,650|1200,0 1130,110 1130,220 1090,400|1085,430 960,620 930,680 810,820 760,930|1060,430 930,600 780,800 760,920|1100,390 1280,345 1450,305 1580,250|1140,230 1240,235 1280,340 1325,520 1330,640|1290,0 1310,70 1370,170 1430,240 1480,460 1520,600 1500,670 1300,690 1220,700|600,425 740,430 820,490 830,550|680,570 830,550 930,610 1010,750 1070,830|370,400 370,460 345,530|600,650 520,690 470,750 400,870 420,1000|0,715 120,775 240,775 300,800 380,770 500,870 640,900 790,930|190,1000 210,880 300,810 310,880 420,910|400,965 560,970|600,650 620,580 660,550|850,850 980,750 1130,710 1330,635 1580,600|1210,670 1240,750 1340,800 1390,870 1390,985|1390,870 1480,890 1560,870|1000,520 1040,520|520,880 650,880 760,940|700,985 820,870|1070,830 1060,860 1000,900 980,985',
q:'960,350 975,320|705,370 710,390|830,130 832,170|250,300 250,280',
m:'-10,190 100,290 180,320 280,370 350,410|180,320 260,280 400,190 490,185 600,110 680,120 900,140 1040,120 1120,145|1145,132 1200,130 1250,120 1380,180 1500,130 1580,160|-10,395 100,485 250,495 510,580 600,670 720,730 790,800 880,840 960,950 970,985|0,610 120,530 140,400 190,320|380,425 460,440 640,370 880,385 990,360 1100,400 1220,535 1300,545 1380,510 1580,470|900,-10 950,130 985,250 985,390 840,550 720,600 680,690|600,790 600,830 645,865|940,920 1150,780 1250,765|1060,972 1300,962 1560,968|1480,-10 1470,70 1495,140|850,850 950,900',
d:'0,165 100,180 210,260|900,70 905,75',
k:'1560,300 1400,340 1370,470 1220,520 1200,620 1215,700 1250,850 1220,970'},
{x:1880,y:1275,
r:'0,290 100,270 220,400 0,470|260,400 480,340 480,500 260,520|500,340 850,300 880,440 520,500|500,530 720,500 730,640 560,660|270,590 460,580 560,700 320,760|30,600 220,590 300,760 160,820|730,500 920,450 980,590 750,640|910,330 1000,340 1120,520 1000,580|900,30 1100,10 1130,100 1000,200|1040,160 1200,150 1200,260 1120,310|0,640 40,920 110,950 0,980|620,0 800,10 800,90|1220,210 1390,290 1350,350 1200,340|500,680 700,650 730,700 540,750|0,490 230,460 220,560 0,590|620,280 730,290 740,340 620,370',
g:'200,0 490,0 400,100 290,175 190,170 160,140|490,90 440,130 380,230 480,210 540,240 730,220 750,190 690,120 620,80|940,600 1060,590 1040,650 880,680|1250,80 1310,90 1380,170 1530,240 1440,400 1340,370 1400,290 1340,230|1120,540 1200,510 1280,400 1350,420 1390,470 1310,560 1110,620|1440,0 1470,80 1400,180 1370,120|1380,520 1450,420 1530,270 1530,610 1400,615 1290,640 1240,630|90,990 350,905 600,810 780,740 1040,700 1240,610 1380,530 1430,600 1290,640 1180,660 1000,710 830,770 650,815 480,865 330,925 150,990|310,290 330,300 320,310|380,200 440,180 400,250|1250,50 1270,60 1270,120 1240,110',
w:'120,985 200,960 330,920 490,860 650,810 830,765 1000,705 1180,662 1240,630 1290,640 1400,610 1530,600 1530,985|500,110 540,85 610,80 620,110 680,140 722,195 720,215 640,195 560,205 500,180 490,140|500,0 605,0 590,25 540,58 510,30|200,178 262,178 262,205 200,205 190,200|692,780 718,765 745,775 718,795|1475,110 1500,90 1480,160|1255,480 1305,520 1270,550|1375,340 1385,370 1375,375|1400,520 1420,530 1410,540|1125,610 1170,600 1180,590 1140,590|1420,300 1440,290 1430,310',
v:'590,50 690,120 760,190 830,255 1010,290 1080,410 1190,500 1240,630|400,275 500,285 620,260 800,245|1190,500 1240,460 1270,410|370,500 380,560 440,690 490,855|1250,120 1290,130 1350,220 1460,245|1460,0 1450,100 1470,300 1475,500|780,650 815,765|10,490 20,600|1135,200 1135,290|650,740 655,800|215,920 225,945|1245,510 1245,560',
u:'340,400 480,420|340,430 480,450|340,460 480,480|380,380 380,500|410,370 410,500|440,370 440,500|350,400 350,490|260,460 330,455|260,490 330,485|280,440 280,520|300,440 300,520|320,440 320,520|900,300 960,320|900,330 950,340|920,290 900,360|940,290 920,350|950,470 1050,420|960,500 1080,460|970,530 1100,500|990,560 1100,530|960,450 1010,560|990,430 1040,560|1020,420 1080,540|1060,400 1140,510|1080,440 1130,410|1100,470 1150,440|1110,490 1165,480|1090,170 1090,260|1060,200 1100,240|1040,220 1120,270|1110,180 1120,250|1130,220 1200,200|1140,240 1190,230|1140,210 1140,240|1165,200 1165,240|1040,230 1060,250|1180,90 1220,60 1240,90 1190,150|1200,60 1200,150|1240,60 1290,110|270,600 270,650 290,700|260,620 190,690|110,640 210,620|100,670 230,640|120,700 240,670|140,740 250,700|150,780 270,740|130,630 210,760|160,620 240,760|190,610 260,740|330,600 380,690|320,640 400,620|330,670 420,650|350,700 430,680|370,730 450,700|400,600 450,720|430,610 480,690|560,570 640,560|560,600 650,590|560,630 650,620|580,550 600,650|610,550 630,650|550,520 610,500|570,540 610,530|670,600 690,600 690,640|670,620 700,620|780,560 880,550|780,590 890,590|780,620 880,610|800,550 850,620|830,540 890,600|790,600 840,550|870,540 800,620|560,325 600,320 600,350 560,350 560,325|640,300 690,290 700,330 650,340|770,370 790,360 830,410|570,430 550,470|560,440 590,440|800,470 800,520|10,540 230,500|20,510 180,490|80,500 90,540|150,500 160,530|0,640 40,640|0,670 40,665|0,780 20,780|0,820 30,820|0,860 30,860|50,660 110,640|50,700 130,680|60,780 130,760|80,820 140,800|320,200 340,170 380,220|260,360 300,380|250,380 290,400|860,150 850,200 870,220 930,140|880,120 930,170|850,160 910,180|940,230 1000,240|930,270 960,230 1000,260|1260,240 1310,260|1300,210 1280,290|1240,300 1280,280|1310,240 1310,290|1320,160 1340,180 1340,220|480,730 560,740|510,710 530,770|740,670 770,680|860,670 890,660|1030,610 1040,600 1030,580|380,790 440,800|900,20 950,50 940,80|950,60 1010,60|840,50 850,80 820,70|830,40 850,45',
s:'610,15 700,60 810,110 890,90|650,40 670,0|815,0 815,110 780,190 720,230 630,210 510,245 460,225 400,235 360,260 220,290 190,330|725,230 740,330 770,450|900,75 960,40 1110,0|1010,210 1130,120 1150,110|1130,10 1160,60 1155,130 1215,200|390,260 390,310 350,335 290,340 240,370|150,270 175,230 220,250 240,295|0,340 100,280|95,280 130,430|0,410 120,375 180,345|0,460 200,410 200,395 155,380|20,360 0,300|460,420 490,400 560,400 620,430 700,405 750,405|460,420 490,460 490,510|610,385 625,500 640,550 680,570 720,560 790,535 910,525 960,525 990,590|500,530 510,555 620,550|500,550 545,600 550,670 600,730 605,775|390,540 400,570 470,600 500,690|300,580 380,770|300,745 500,700 550,675 680,650 860,635 1000,585 1120,540 970,330|1050,290 910,350 905,380 920,430 915,520 935,600|850,640 855,685|500,760 515,800|630,540 660,600 660,640|0,730 45,720 180,725 240,790|45,600 45,720|20,730 40,920|50,620 150,820|75,760 110,950|40,930 90,910|230,795 300,745|1220,200 1280,200 1395,290 1350,350 1225,310|1190,340 1280,200|1380,220 1310,340|1190,240 1230,270|1460,595 1490,600 1527,560',
p:'-10,285 80,230|470,100 460,230 500,330 580,380 780,330 830,350 850,440|870,-10 890,80 1100,320 1270,380 1400,465 1440,465 1520,405|1268,-10 1210,200 1100,320 1010,400 850,450 640,480 480,520 240,550 0,600|0,625 240,580 380,560 480,520|705,480 720,560 740,690 600,735 380,780 320,790|0,890 150,840|1360,440 1400,420 1460,450|1535,470 1515,490 1527,530|0,610 10,670',
q:'745,700 780,720 740,750|960,130 1000,130|950,150 960,180|1490,225 1525,240',
m:'-10,130 120,195 290,240 390,200 470,100 600,20 610,-10|0,140 120,270 240,390 235,590 320,790|-20,495 250,430 480,330 620,270 830,275 960,170 1170,15 1270,15 1380,180 1490,225|-20,975 150,910 320,850 600,790 900,690 1030,685 1330,560 1430,410 1535,255',
k:'200,0 170,110|240,0 180,120|100,0 130,100 110,190|1470,150 1530,60|1480,180 1530,120|400,130 430,100|60,0 100,60|270,30 250,140|300,30 280,130'}
];
const LABELS = [['BUKIT',1130.7,1103.3,54],['PANJANG',1114.7,1121,86],['TENGAH',904.5,1197,76],['HILLVIEW',1089.5,1251.7,85.5],['BUKIT',1022.5,1287.7,53],['BATOK',1019.5,1306,59.5],['THOMSON',1470.5,1126,94.5],['SENGKANG',1849,1049,102.5],['HOUGANG',1800,1151.3,95.5],['KOVAN',1817.5,1230.7,63],['PASIR RIS',2174.5,1147.7,85.5],['LOYA',2342,1140.3,47],['TAMPINES',2136,1260.3,92.5],['CHANG',2327.7,1265,69],['TAI SENG',1833,1353.3,81.5],['CLEMENTI',1081,1497.7,91],['NOVENA',1523.5,1444,78],['NEWTON',1530.5,1527.7,80.5],['MARINE',1935.5,1553.3,72.5],['PARADE',1935,1571,74]];

/* Turns a list of points into a smooth path (Catmull-Rom through every point). */
function curve(list, closed, tension) {
  const p = list.trim().split(/\s+/).map(s => s.split(',').map(Number)), n = p.length;
  const at = i => closed ? p[(i + n) % n] : p[Math.max(0, Math.min(n - 1, i))];
  let d = `M${p[0]}`;
  for (let i = 0; i < (closed ? n : n - 1); i++) {
    const a = at(i - 1), b = at(i), c = at(i + 1), e = at(i + 2);
    d += `C${b[0] + (c[0] - a[0]) * tension} ${b[1] + (c[1] - a[1]) * tension} ${c[0] - (e[0] - b[0]) * tension} ${c[1] - (e[1] - b[1]) * tension} ${c}`;
  }
  return d + (closed ? 'Z' : '');
}
const layer = (key, cls, closed, tension) => `<g class="${cls}">` + SHEETS.map(s => s[key] ?
  `<path transform="translate(${s.x} ${s.y}) scale(.33333)" d="${s[key].split('|').map(l => curve(l, closed, tension)).join('')}"/>` : '').join('') + '</g>';

define('city-map', `<style>
:host{display:block;position:relative;width:1504px;height:640px;overflow:hidden;background:#fbf8f4}
.map{display:block;width:1504px;height:640px}
.map path{stroke-linecap:round;stroke-linejoin:round}
.res{fill:#f7f2ed}.green{fill:#e9f0de}.forest{fill:#dfebd2}.water{fill:#d8e6eb;stroke:#c9dde4;stroke-width:3}
.rv{fill:none;stroke:#cbe2e9;stroke-width:6}.rv2{fill:none;stroke:#cfe2e8;stroke-width:18}
.minor{fill:none;stroke:#fff;stroke-width:6}.closed{fill:none;stroke:#e8e6e2;stroke-width:5}
.sc{fill:none;stroke:#feedc6;stroke-width:18}.sf{fill:none;stroke:#fff;stroke-width:9}
.pc{fill:none;stroke:#fdeec4;stroke-width:28}.pf{fill:none;stroke:#fffbd8;stroke-width:18}
.xc{fill:none;stroke:#fae3a4;stroke-width:9}
.mc{fill:none;stroke:#f7dda0;stroke-width:31}.mf{fill:none;stroke:#fbe8aa;stroke-width:20}
.dash{fill:none;stroke:#f3ecec;stroke-width:8}.dash2{fill:none;stroke:#e0c8d0;stroke-width:7;stroke-dasharray:9 13}.dash2 path,.dash path{stroke-linecap:butt}
text{font:400 18px Lato,"Open Sans",sans-serif;letter-spacing:0;fill:#46607f;stroke:#f2f3f8;stroke-width:4px;stroke-linejoin:round;paint-order:stroke}
.zoom{position:absolute;left:20px;top:20px;display:flex;flex-direction:column;border:4px solid rgba(0,0,0,.2);border-radius:8px;background-clip:padding-box}
.zoom div{display:flex;align-items:center;justify-content:center;width:60px;height:60px;box-sizing:border-box;padding:7px 0 0 2px;background:#fff;border-radius:0 0 4px 4px}
.zoom div:first-child{padding-top:10px;border-bottom:2px solid #ccc;border-radius:4px 4px 0 0}
.zoom svg{display:block;width:26px;height:26px}
.credit{position:absolute;right:0;bottom:0;display:flex;align-items:center;gap:8px;width:123px;height:34px;box-sizing:border-box;padding-left:10px;background:rgba(255,255,255,.8);color:#2f74a3;font:24px/34px "Liberation Sans",sans-serif}
.credit svg{display:block;width:24px;height:16px}
</style><svg class="map" viewBox="885 960 1504 640">
<defs><linearGradient id="pin" x2="0" y2="1"><stop stop-color="#63b946"/><stop offset="1" stop-color="#46a035"/></linearGradient></defs>`
+ layer('r','res',true,0) + layer('g','green',true,.05) + layer('f','forest',true,.1) + layer('w','water',true,.12) + layer('i','green',true,.14)
+ layer('v','rv',false,.16) + layer('V','rv2',false,.16) + layer('k','closed',false,.1) + layer('u','minor',false,.12)
+ layer('d','dash',false,.1) + layer('d','dash2',false,.1)
+ layer('s','sc',false,.13) + layer('p','pc',false,.16) + layer('s','sf',false,.13) + layer('q','xc',false,.16)
+ layer('m','mc',false,.16) + layer('m','mf',false,.16) + layer('p','pf',false,.16)
+ LABELS.map(([t, x, y, w]) => `<text x="${x}" y="${y}" textLength="${w}" lengthAdjust="spacingAndGlyphs">${t}</text>`).join('')
+ `<path d="M1491 1424C1486 1410 1472 1398 1472 1386A19 19 0 0 1 1510 1386C1510 1398 1496 1410 1491 1424Z" fill="url(#pin)" stroke="#3a8330" stroke-width="1.5"/><circle cx="1491" cy="1385" r="6.5" fill="#fff" stroke="#3a8a2f" stroke-width="1.5"/>
</svg>
<div class="zoom"><div><svg viewBox="0 0 26 26"><path d="M.5 13H25.5M13 .5V25.5" stroke="#000" stroke-width="4.6"/></svg></div><div><svg viewBox="0 0 26 26"><path d="M.5 14H25.5" stroke="#000" stroke-width="4.6"/></svg></div></div>
<div class="credit"><svg viewBox="0 0 24 16"><path fill="#557cdc" d="M0 0H24V8H0Z"/><path fill="#f9d84d" d="M0 8H24V14H0Z"/><path fill="#dcc043" d="M0 14H24V16H0Z"/></svg><span>Leaflet</span></div>`);
</script>
</body>
</html>
